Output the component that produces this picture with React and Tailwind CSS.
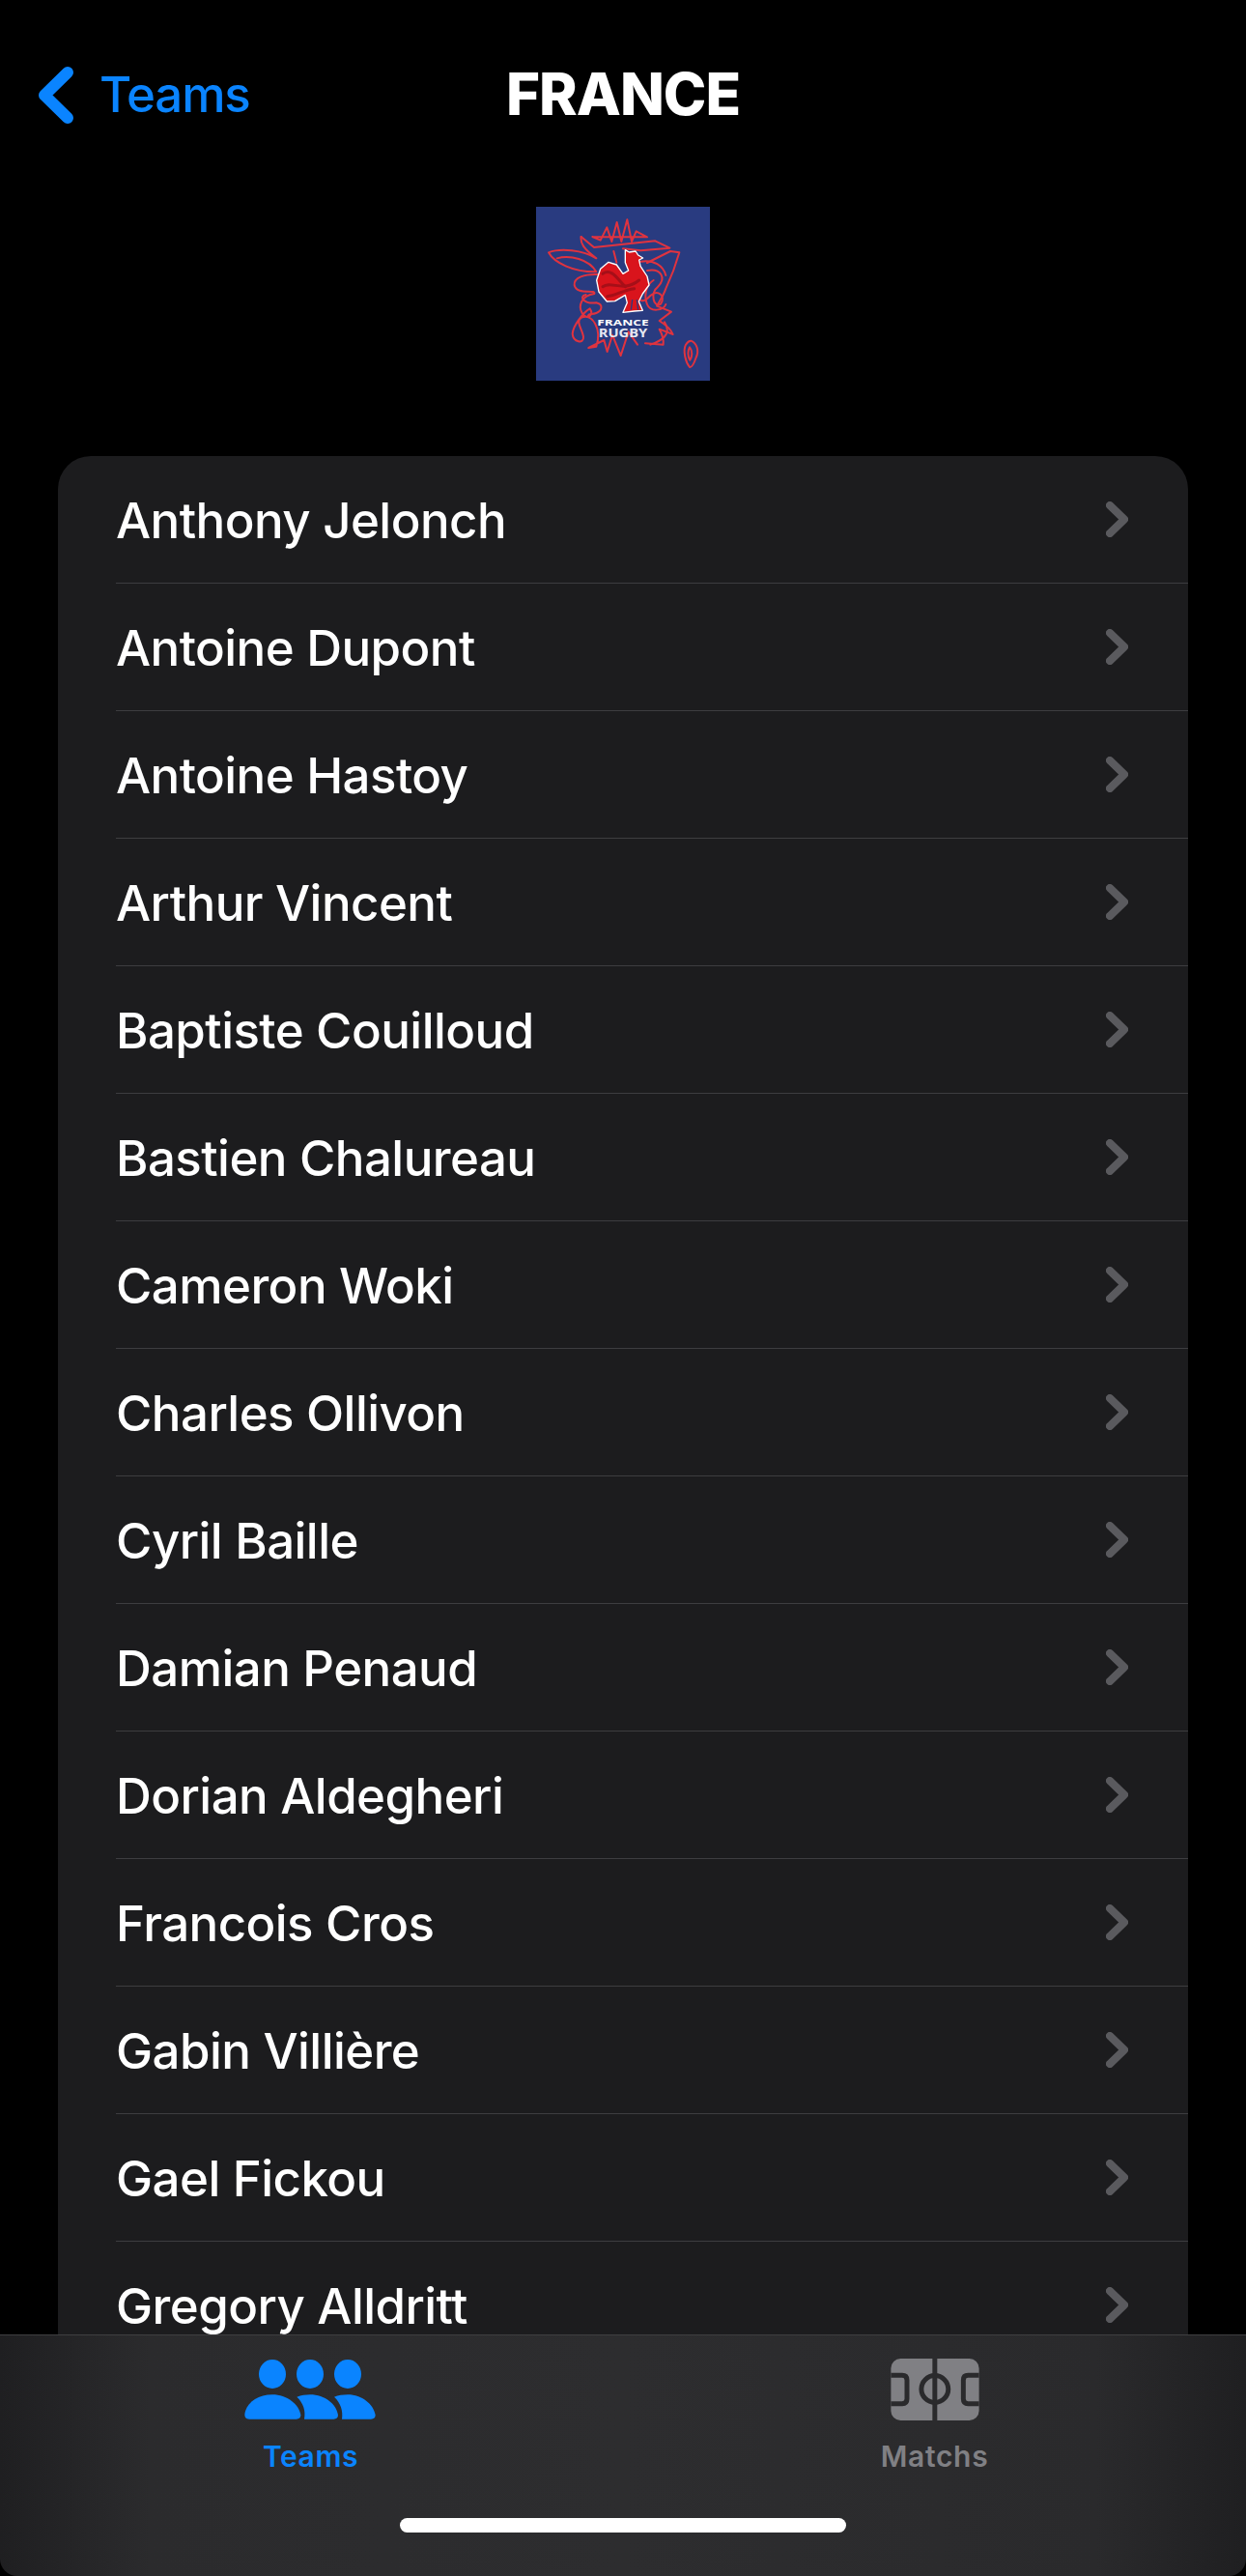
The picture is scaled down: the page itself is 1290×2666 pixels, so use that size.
import React from 'react';

const players = [
  'Anthony Jelonch',
  'Antoine Dupont',
  'Antoine Hastoy',
  'Arthur Vincent',
  'Baptiste Couilloud',
  'Bastien Chalureau',
  'Cameron Woki',
  'Charles Ollivon',
  'Cyril Baille',
  'Damian Penaud',
  'Dorian Aldegheri',
  'Francois Cros',
  'Gabin Villière',
  'Gael Fickou',
  'Gregory Alldritt',
];

const FranceLogo = () => (
  <svg viewBox="75 42 540 540" className="w-[180px] h-[180px] shrink-0">
    <rect x="75" y="42" width="540" height="540" fill="#293b80" />
    <g fill="none" stroke="#e0333f" strokeWidth="6" strokeLinejoin="round" strokeLinecap="round">
      <path d="M250 135 L275 146 L295 106 L310 150 L326 90 L340 150 L358 82 L372 150 L386 118 L420 136 L250 135" />
      <path d="M215 135 L255 168 L445 148 L490 170 L400 178 L345 172" />
      <path d="M215 135 C212 155 222 172 262 202 C220 176 150 170 114 184 C130 215 190 245 262 244 C240 205 180 190 140 202" />
      <path d="M520 184 L492 180 L420 216 M520 184 C510 220 495 260 478 296 C470 320 455 340 450 350 L495 368 L458 396 C480 410 495 425 500 438 L458 422 C468 440 472 455 470 470 L414 466" />
      <path d="M400 212 C440 205 470 225 478 255 M420 240 C462 232 482 262 452 292 C430 306 438 358 462 344 C480 320 452 296 430 318 C404 346 392 332 396 312" />
      <path d="M316 180 L325 215 M440 270 C415 285 410 320 420 345 C430 370 470 365 478 345" />
      <path d="M268 252 C225 250 192 262 194 285 C200 318 262 296 256 312 C215 318 205 350 218 372 C232 395 258 380 242 358 C222 370 190 410 188 436 C190 462 224 470 222 445 C218 420 196 398 216 386 C250 372 280 420 262 476 L238 480 L286 456 L296 492 L312 440 L338 504 L362 430 L390 470" />
      <path d="M230 315 C205 320 225 345 262 340 C285 345 280 365 262 372 C248 378 238 370 236 382" />
      <path d="M430 470 C460 460 500 440 474 400" />
      <path d="M556 458 C575 466 582 490 572 510 C565 530 558 542 552 540 C540 525 530 490 540 470 C545 462 550 458 556 458 Z" />
      <path d="M552 478 C562 490 560 508 553 518 C545 505 546 488 552 478 Z" />
    </g>
    <path
      d="M352 176 L364 183 L384 180 L392 192 L407 201 L395 207 L399 226 L420 258 L426 285 L406 312 L394 336 L406 364 L380 366 L345 370 L358 340 L352 316 L320 335 L295 336 L270 306 L263 270 L275 235 L300 214 L325 222 L345 250 L362 240 L352 215 Z"
      fill="#d9141c"
      stroke="#ffffff"
      strokeWidth="4"
      strokeLinejoin="round"
    />
    <g fill="none" stroke="#a60f18" strokeWidth="9" strokeLinecap="round">
      <path d="M282 250 C310 230 330 270 352 290" />
      <path d="M282 290 C310 270 345 310 395 270" />
      <path d="M296 320 C320 320 345 300 380 296" />
    </g>
    <path d="M374 330 L370 362 M388 330 L392 362" stroke="#293b80" strokeWidth="4" />
    <text x="345" y="412" textAnchor="middle" textLength="160" lengthAdjust="spacingAndGlyphs" fill="#ffffff" fontSize="28" fontWeight="700" fontFamily="'Open Sans', sans-serif">FRANCE</text>
    <text x="345" y="446" textAnchor="middle" textLength="152" lengthAdjust="spacingAndGlyphs" fill="#e6e8f2" fontSize="35" fontWeight="700" fontFamily="'Open Sans', sans-serif">RUGBY</text>
  </svg>
);

const PlayerRow = ({ name }) => (
  <div className="h-[132px] ml-[60px] pr-[62px] flex items-center justify-between border-b border-[#3d3d40] shrink-0">
    <span className="mt-[2px] text-[51px] leading-[60px] font-medium text-white tracking-[-0.55px]">{name}</span>
    <svg viewBox="0 0 23 37" className="w-[23px] h-[37px] shrink-0" fill="none" stroke="#5a5a5e" strokeWidth="8" strokeLinecap="round" strokeLinejoin="round">
      <path d="M4 4 L19 18.5 L4 33" />
    </svg>
  </div>
);

const TeamsIcon = () => (
  <svg viewBox="100 96 406 186" className="w-[136px] h-[62px] mt-[1px] mr-[3px]" fill="#0a84ff">
    <ellipse cx="186" cy="141" rx="42" ry="45" />
    <ellipse cx="303" cy="141" rx="42" ry="45" />
    <ellipse cx="420" cy="141" rx="42" ry="45" />
    <path d="M100 266 C105 230 140 205 186 205 C232 205 268 235 274 268 Q274 281 260 281 L115 281 Q100 281 100 266 Z" />
    <path d="M262 212 C275 207 290 205 303 205 C350 205 385 235 390 268 Q390 281 376 281 L285 281 C290 255 282 230 262 212 Z" />
    <path d="M378 212 C390 207 405 205 420 205 C465 205 500 235 506 268 Q506 281 492 281 L402 281 C406 255 398 230 378 212 Z" />
  </svg>
);

const MatchsIcon = () => (
  <svg viewBox="93 92 275 193" className="w-[92px] h-[64px]">
    <rect x="93" y="92" width="275" height="193" rx="30" fill="#808084" />
    <g fill="none" stroke="#2a2a2c" strokeWidth="15">
      <path d="M230 92 L230 285" />
      <circle cx="230" cy="187" r="42" />
      <path d="M93 144 L128 144 Q143 144 143 159 L143 218 Q143 233 128 233 L93 233" />
      <path d="M368 144 L334 144 Q319 144 319 159 L319 218 Q319 233 334 233 L368 233" />
    </g>
  </svg>
);

export default function App() {
  return (
    <div className="w-[1290px] h-[2666px] bg-black flex flex-col overflow-hidden font-['Inter',sans-serif]">
      {/* nav bar */}
      <div className="relative h-[214px] shrink-0">
        <div className="flex items-center pl-[40px] pt-[68px] gap-[27px] text-[#0a84ff]">
          <svg viewBox="0 0 36 59" className="w-[36px] h-[59px] shrink-0" fill="none" stroke="#0a84ff" strokeWidth="12" strokeLinecap="round" strokeLinejoin="round">
            <path d="M30 6 L6 29.5 L30 53" />
          </svg>
          <span className="text-[51px] leading-[60px] tracking-[-1.2px] font-medium">Teams</span>
        </div>
        <div className="absolute top-[66px] left-0 w-full text-center text-[60px] leading-[62px] font-extrabold tracking-[-1px] text-white">FRANCE</div>
      </div>

      <div className="flex justify-center shrink-0">
        <FranceLogo />
      </div>

      {/* players list, cut off by the tab bar */}
      <div className="flex-1 min-h-0 overflow-hidden px-[60px] pt-[78px]">
        <div className="bg-[#1c1c1e] rounded-t-[34px] flex flex-col">
          {players.map((name) => (
            <PlayerRow key={name} name={name} />
          ))}
        </div>
      </div>

      {/* tab bar */}
      <div className="h-[250px] shrink-0 flex flex-col rounded-b-[18px] border-t border-[#3f3f41] bg-[linear-gradient(90deg,#1f1f21_0%,#2b2b2d_12%,#2d2d2f_50%,#2a2a2c_88%,#1f1f21_100%)]">
        <div className="grid grid-cols-2 pt-[24px]">
          <div className="flex flex-col items-center">
            <TeamsIcon />
            <span className="mt-[20px] mr-[2px] text-[30px] leading-[36px] font-semibold tracking-[0.6px] text-[#0a84ff]">Teams</span>
          </div>
          <div className="flex flex-col items-center">
            <MatchsIcon />
            <span className="mt-[19px] text-[30px] leading-[36px] font-semibold tracking-[0.7px] text-[#808084]">Matchs</span>
          </div>
        </div>
        <div className="mt-[46px] mx-auto w-[462px] h-[15px] rounded-full bg-white" />
      </div>
    </div>
  );
}
